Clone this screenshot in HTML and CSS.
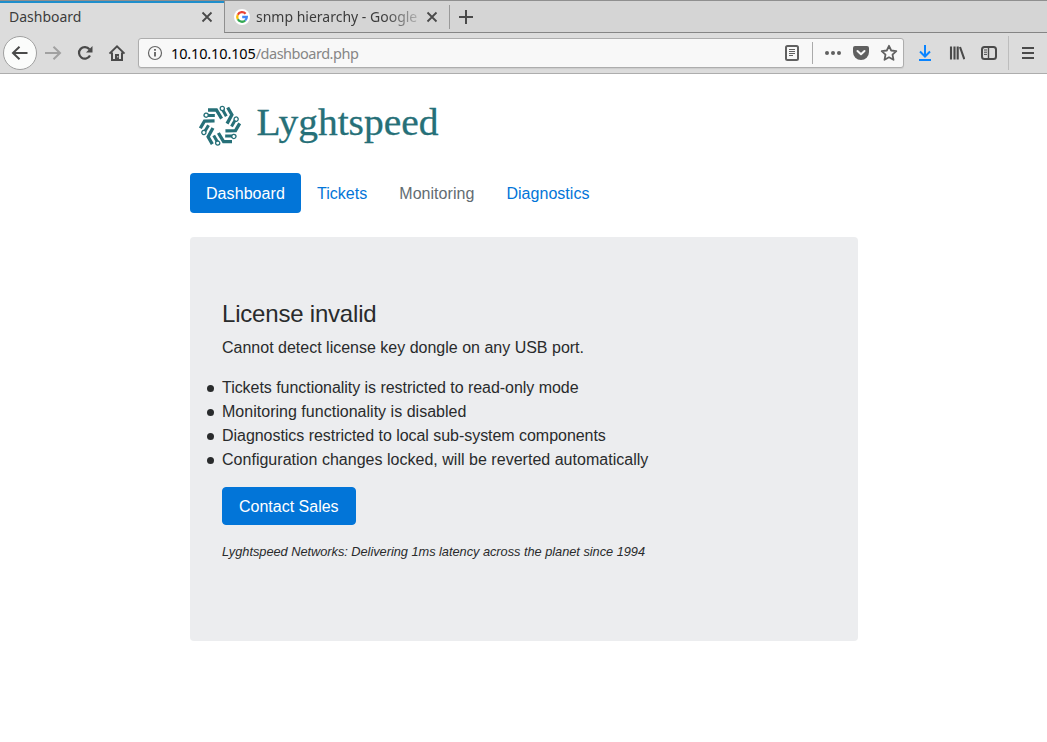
FILE: index.html
```html
<!DOCTYPE html>
<html lang="en">
<head>
<meta charset="utf-8">
<title>Dashboard</title>
<link rel="stylesheet" href="styles.css">
</head>
<body>
<header class="chrome">
  <div class="tabs">
    <div class="tab tab-active"><span class="tab-title title-active">Dashboard</span>
      <svg class="close" width="12" height="12" viewBox="0 0 12 12"><path d="M1.5 1.5l9 9M10.5 1.5l-9 9"/></svg></div>
    <div class="tab tab-idle">
      <svg class="favicon" width="16" height="16" viewBox="0 0 16 16"><circle cx="8" cy="8" r="8" fill="#fff"/><g fill="none" stroke-width="2.3"><path d="M11.6 4.7A4.8 4.8 0 0 0 3.8 5.7" stroke="#ea4335"/><path d="M3.8 5.7a4.8 4.8 0 0 0 0 4.6" stroke="#fbbc05"/><path d="M3.8 10.3a4.8 4.8 0 0 0 7.4 1.2" stroke="#34a853"/><path d="M11.2 11.5A4.8 4.8 0 0 0 12.8 8H8.2" stroke="#4285f4"/></g></svg>
      <span class="tab-title title-idle">snmp hierarchy - Google</span>
      <svg class="close" width="12" height="12" viewBox="0 0 12 12"><path d="M1.5 1.5l9 9M10.5 1.5l-9 9"/></svg></div>
    <div class="newtab"><svg width="16" height="16" viewBox="0 0 16 16"><path d="M8 1v14M1 8h14" stroke="#4a4a4a" stroke-width="2"/></svg></div>
  </div>
  <div class="toolbar">
    <div class="back"><svg class="ico" width="18" height="16" viewBox="0 0 18 16"><path d="M16.5 8H2M8.5 1.8L2 8l6.500 6.200"/></svg></div>
    <svg class="ico forward" width="18" height="16" viewBox="0 0 18 16"><path d="M1 8h14.500M9.500 1.800L16 8l-6.500 6.200"/></svg>
    <svg class="ico reload" width="16" height="16" viewBox="0 0 16 16"><path d="M13 10.500A5.800 5.800 0 1 1 12.400 4.300" stroke-width="2.200"/><path d="M15.500 1v6.500H9z" fill="#4a4a4a" stroke="none"/></svg>
    <svg class="ico home" width="18" height="16" viewBox="0 0 18 16"><path d="M1.500 8.600L9 1.400l7.500 7.200M4 7.500V15h10V7.500"/><path d="M7 9h4v6H7z" fill="#4a4a4a" stroke="none"/><path d="M9.300 11h1v1.500h-1z" fill="#ddd" stroke="none"/></svg>
    <div class="urlbar">
      <svg width="16" height="16" viewBox="0 0 16 16"><circle cx="8" cy="8" r="6.500" fill="none" stroke="#666" stroke-width="1.200"/><path d="M8 7v4.500M8 4v1.800" stroke="#555" stroke-width="1.700"/></svg>
      <span class="url"><span class="host">10.10.10.105</span><span class="path">/dashboard.php</span></span>
      <svg class="reader" width="16" height="18" viewBox="0 0 16 18"><rect x="2" y="2" width="12" height="14" rx="1.500" fill="none" stroke="#606060" stroke-width="2"/><path d="M5 5.500h6M5 7.500h6M5 9.500h6M5 11.500h4" stroke="#606060"/></svg>
      <i class="url-sep"></i>
      <svg class="dots" width="18" height="16" viewBox="0 0 18 16" fill="#606060"><circle cx="3" cy="8" r="2"/><circle cx="9" cy="8" r="2"/><circle cx="15" cy="8" r="2"/></svg>
      <svg class="pocket" width="16" height="16" viewBox="0 0 16 16"><path d="M2 1h12a2 2 0 0 1 2 2v4a8 8 0 0 1-16 0V3a2 2 0 0 1 2-2z" fill="#606060"/><path d="M4.500 6L8 9.300 11.500 6" fill="none" stroke="#f8f8f8" stroke-width="2" stroke-linecap="round" stroke-linejoin="round"/></svg>
      <svg class="star" width="18" height="18" viewBox="0 0 18 18"><path d="M9 1.800l2.200 4.700 5.100.6-3.800 3.500 1 5.200L9 13.300l-4.500 2.500 1-5.200L1.700 7.100l5.100-.6z" fill="none" stroke="#606060" stroke-width="1.800" stroke-linejoin="round"/></svg>
    </div>
    <svg class="download" width="16" height="18" viewBox="0 0 16 18"><path d="M8 1v11M3 7.500l5 5 5-5M2 16h12" fill="none" stroke="#0a84ff" stroke-width="2"/></svg>
    <svg class="library" width="16" height="16" viewBox="0 0 16 16"><path d="M2 1.500v13M5.500 1.500v13M8.700 1.500v13M11 2l4.300 12.200" fill="none" stroke="#4a4a4a" stroke-width="2.100"/></svg>
    <svg class="sidebar" width="16" height="16" viewBox="0 0 16 16"><rect x="1" y="2" width="14" height="12" rx="2.500" fill="none" stroke="#4a4a4a" stroke-width="2"/><path d="M7.500 2v12" stroke="#4a4a4a" stroke-width="1.400"/><path d="M3 5h3M3 7.200h3M3 9.400h3" stroke="#4a4a4a"/></svg>
    <div class="menu"><svg width="14" height="14" viewBox="0 0 14 14"><path d="M1 2h12M1 7h12M1 12h12" stroke="#4a4a4a" stroke-width="2"/></svg></div>
  </div>
</header>
<main class="page">
  <svg class="logo" width="260" height="60" viewBox="0 0 260 60">
    <defs><g id="trace"><path d="M-12-15.800H-3.600L1.600-7.200" fill="none" stroke="#267078" stroke-width="3.300"/><path d="M2.800-15.800L6.300-9.600" stroke="#267078" stroke-width="3"/><circle cx="2.300" cy="-17.300" r="2.100" fill="#fff" stroke="#267078" stroke-width="1.300"/></g></defs>
    <g transform="translate(30 29.800)"><use href="#trace"/><use href="#trace" transform="rotate(60)"/><use href="#trace" transform="rotate(120)"/><use href="#trace" transform="rotate(180)"/><use href="#trace" transform="rotate(240)"/><use href="#trace" transform="rotate(300)"/></g>
    <text class="wordmark" x="66.500" y="39" textLength="182" lengthAdjust="spacingAndGlyphs">Lyghtspeed</text>
  </svg>
  <nav class="nav"><a class="pill selected">Dashboard</a><a class="pill">Tickets</a><a class="pill disabled">Monitoring</a><a class="pill">Diagnostics</a></nav>
  <section class="panel">
    <h4 class="heading">License invalid</h4>
    <p class="lead">Cannot detect license key dongle on any USB port.</p>
    <ul class="limits">
      <li class="t1">Tickets functionality is restricted to read-only mode</li>
      <li class="t2">Monitoring functionality is disabled</li>
      <li class="t1">Diagnostics restricted to local sub-system components</li>
      <li class="t2">Configuration changes locked, will be reverted automatically</li>
    </ul>
    <a class="button">Contact Sales</a>
    <p class="tagline">Lyghtspeed Networks: Delivering 1ms latency across the planet since 1994</p>
  </section>
</main>
</body>
</html>
```

FILE: styles.css
```css
* { box-sizing: border-box; }
body { margin: 0; background: #fff; color: #292b2c; font: 16px/24px "Liberation Sans", Arial, sans-serif; overflow: hidden; }
svg { display: block; flex: none; }
.chrome { height: 74px; background: #dcdcdc; border-bottom: 1px solid #adadad; font-family: "Noto Sans", sans-serif; font-size: 14px; color: #3c3c3c; }
.tabs { display: flex; height: 33px; background: #d5d5d5; border-top: 1px solid #8f8f8f; }
.tab { display: flex; align-items: center; height: 32px; }
.tab-active { width: 224px; padding: 0 11px 2px 9px; background: #dcdcdc; border-top: 2px solid #1f8fcc; justify-content: space-between; }
.tab-idle { width: 225px; padding: 0 12px 0 9px; border-left: 1px solid #8f8f8f; border-bottom: 1px solid #858585; }
.tab-title { white-space: nowrap; line-height: 20px; }
.title-idle { width: 163px; margin: 0 7px 0 6px; flex: none; -webkit-mask-image: linear-gradient(90deg, #000 128px, transparent 172px); mask-image: linear-gradient(90deg, #000 128px, transparent 172px); }
.close { fill: none; stroke: #4a4a4a; stroke-width: 1.8; }
.newtab { display: flex; align-items: center; flex: 1; border-bottom: 1px solid #858585; }
.newtab::before { content: ""; width: 1px; height: 24px; margin-right: 8px; background: #999; }
.toolbar { display: flex; align-items: center; height: 40px; padding-left: 3px; }
.ico { fill: none; stroke: #4a4a4a; stroke-width: 2; }
.back { display: flex; align-items: center; justify-content: center; width: 34px; height: 34px; border: 1px solid #a0a0a0; border-radius: 50%; background: #fbfcfb; }
.forward { margin-left: 7px; stroke: #a1a1a1; }
.reload { margin-left: 15px; }
.home { margin-left: 15px; }
.urlbar { display: flex; align-items: center; width: 766px; height: 30px; margin-left: 12px; padding: 0 5px 0 8px; border: 1px solid #adadad; border-radius: 3px; background: #f8f8f8; box-shadow: 0 1px 1px #ccc; }
.url { flex: 1; margin-left: 8px; padding-bottom: 1px; white-space: nowrap; font-size: 14.5px; }
.host { color: #000; letter-spacing: -.14px; }
.path { color: #868686; letter-spacing: -.48px; }
.url-sep { width: 1px; height: 22px; margin: 0 11px 0 12px; background: #aaa; }
.pocket { margin-left: 11px; }
.star { margin-left: 11px; }
.download { margin-left: 13px; }
.library, .sidebar { margin-left: 16px; }
.menu { display: flex; align-items: center; height: 34px; margin-left: 11px; padding-left: 12px; border-left: 1px solid #bdbdbd; }
.page { width: 668px; margin-left: 190px; padding-top: 22px; }
.logo { overflow: visible; }
.wordmark { font-family: "Liberation Serif", serif; font-size: 37.5px; fill: #267078; stroke: #267078; stroke-width: .3; }
.nav { display: flex; margin-top: 17px; }
.pill { height: 40px; padding: 9px 16px 7px; border-radius: 4px; color: #0275d8; letter-spacing: .04px; }
.selected { background: #0275d8; color: #fff; letter-spacing: .07px; }
.disabled { color: #636c72; }
.panel { height: 404px; margin-top: 24px; padding: 64px 32px; border-radius: 4px; background: #ecedef; }
.heading { margin: 0 0 9px; font-size: 24px; line-height: 26px; font-weight: 400; letter-spacing: -.2px; }
.lead { margin: 0 0 16px; }
.limits { margin: 0 0 15px -15px; padding: 0; list-style: none; }
.limits li { display: flex; align-items: center; }
.limits li::before { content: ""; width: 7px; height: 7px; margin-right: 8px; border-radius: 50%; background: #292b2c; }
.t1 { letter-spacing: -.04px; }
.t2 { letter-spacing: .02px; }
.button { display: inline-block; height: 38px; padding: 7px 16px 5px; border: 1px solid #0275d8; border-radius: 4px; background: #0275d8; color: #fff; vertical-align: top; }
.tagline { margin: 15px 0 0; font-size: 12.8px; font-style: italic; letter-spacing: -.03px; }
```
